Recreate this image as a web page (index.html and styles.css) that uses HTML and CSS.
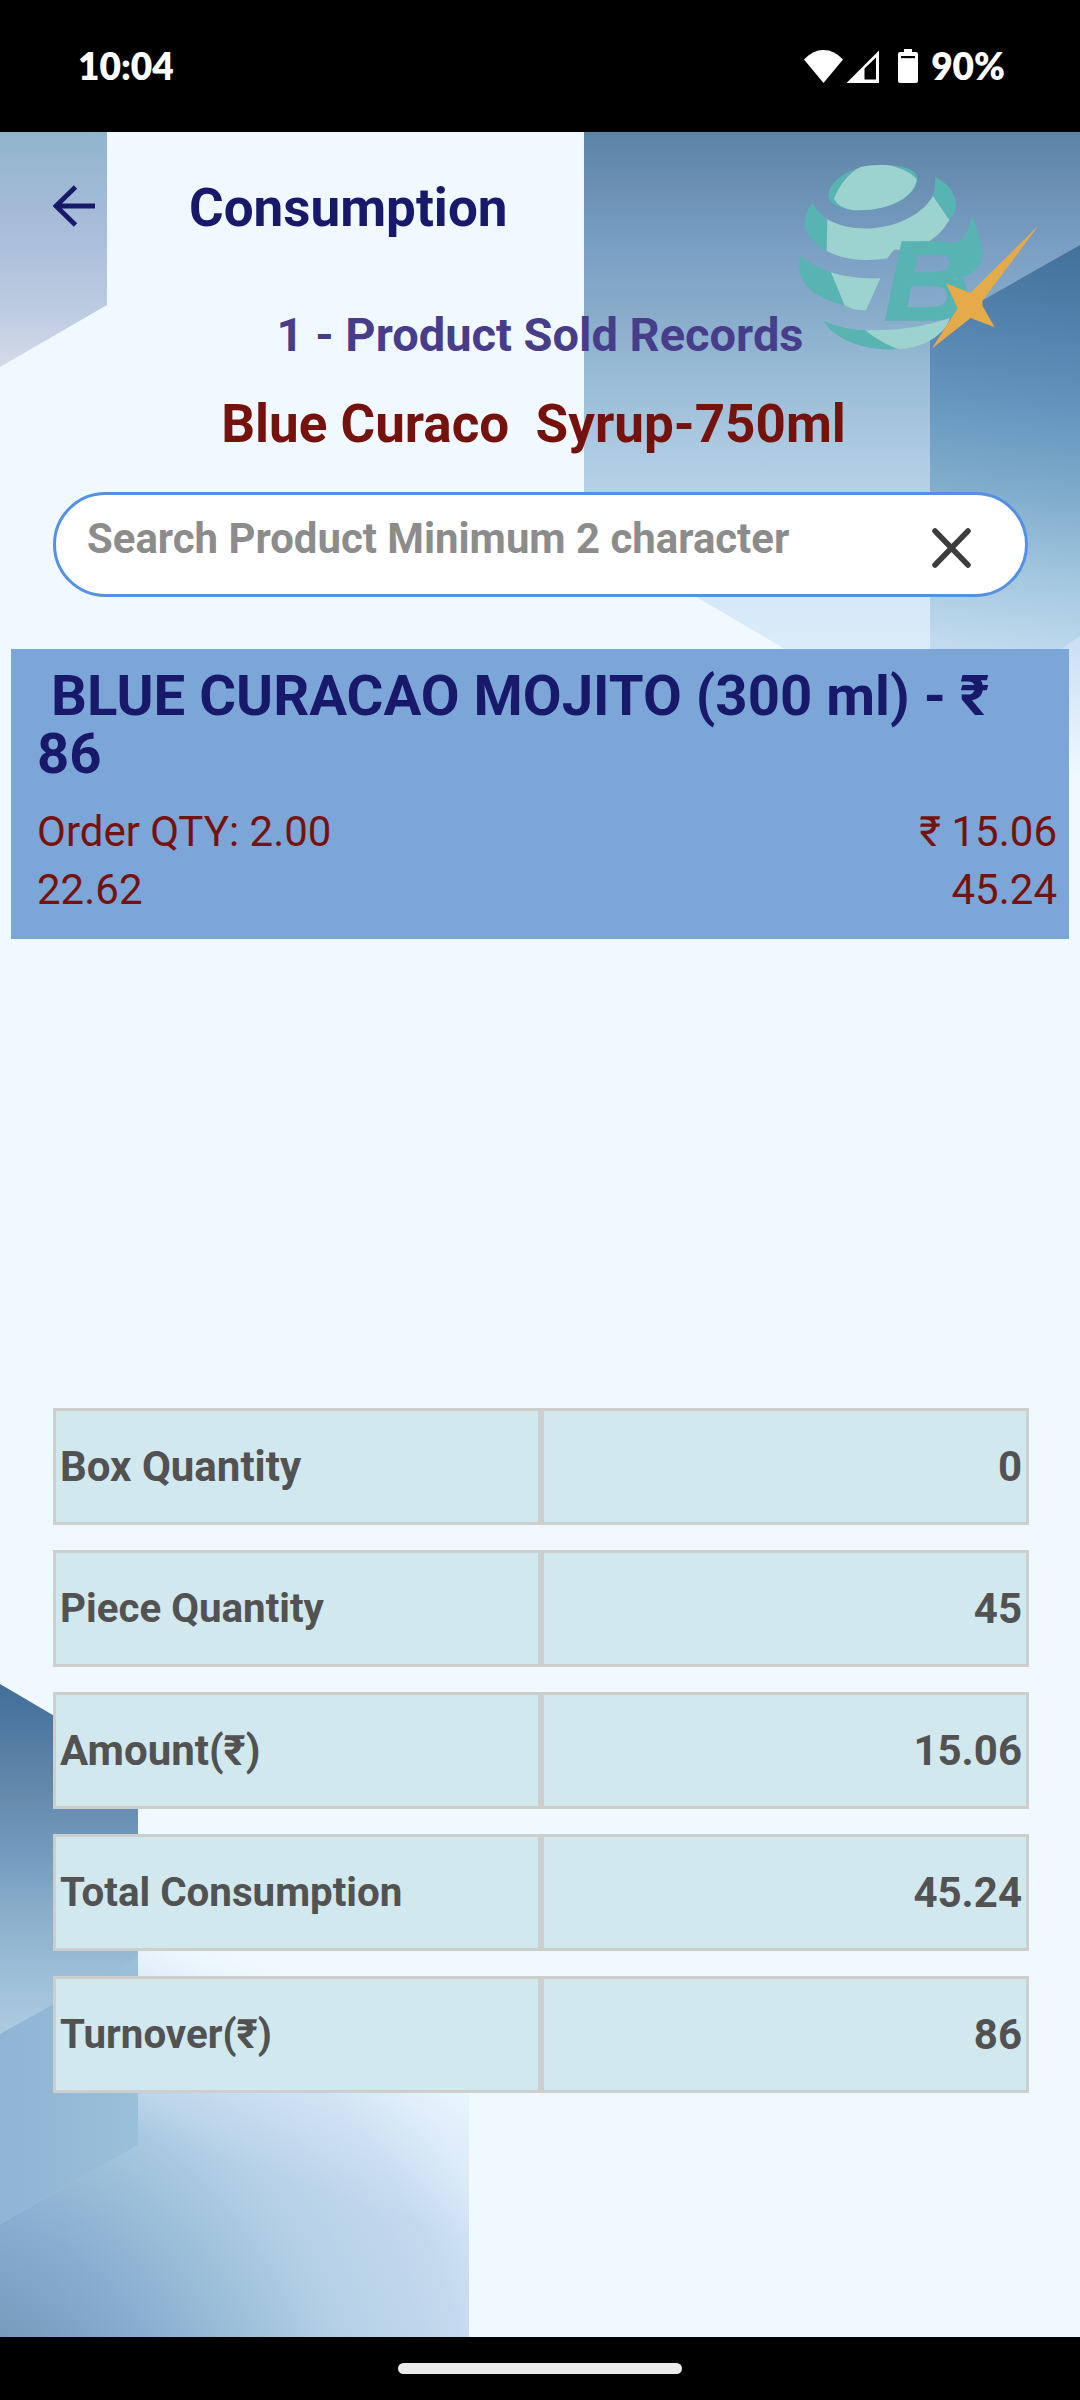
FILE: index.html
```html
<!DOCTYPE html>
<html lang="en">
<head>
<meta charset="utf-8">
<title>Consumption</title>
<link rel="stylesheet" href="styles.css">
</head>
<body>
<div class="phone">
  <header class="status">
    <span class="clock">10:04</span>
    <div class="indicators">
      <svg class="signals" viewBox="0 0 115 36" width="115" height="36">
        <path d="M0 11.500Q8.500 2 19.500 2Q30.500 2 39 11.500L19.500 35Z" fill="#fff"/>
        <path d="M42.500 35L75 2.500V35Z" fill="#fff"/>
        <path d="M60.500 20.500L72 9.500V31.500H60.500Z" fill="#000"/>
        <path d="M100 1h8v3h4q2 0 2 2v27q0 2-2 2h-16q-2 0-2-2v-27q0-2 2-2h4z" fill="#fff"/>
        <path d="M97 8h14v2.200h-14z" fill="#000"/>
      </svg>
      <span class="percent">90%</span>
    </div>
  </header>

  <main class="app">
    <svg class="backdrop" viewBox="0 132 1080 2205" width="1080" height="2205" aria-hidden="true">
      <defs>
        <linearGradient id="tl" x1="0" y1="0" x2="0" y2="1">
          <stop offset="0" stop-color="#91b4cd"/><stop offset=".42" stop-color="#a9bdda"/><stop offset=".75" stop-color="#bccbe0"/><stop offset="1" stop-color="#d5dbe9"/>
        </linearGradient>
        <linearGradient id="tr" gradientUnits="userSpaceOnUse" x1="0" y1="132" x2="0" y2="655">
          <stop offset="0" stop-color="#5c84a6"/><stop offset=".1" stop-color="#6a8fb3"/><stop offset=".22" stop-color="#7a9fc4"/><stop offset=".34" stop-color="#87abc9"/><stop offset=".48" stop-color="#9bbdd7"/><stop offset=".62" stop-color="#aecbe3"/><stop offset=".75" stop-color="#bdd6ea"/><stop offset=".89" stop-color="#d6e7f7"/><stop offset="1" stop-color="#dbecfb"/>
        </linearGradient>
        <linearGradient id="dark" gradientUnits="userSpaceOnUse" x1="1040" y1="245" x2="990" y2="650">
          <stop offset="0" stop-color="#42729a"/><stop offset=".2" stop-color="#5382ae"/><stop offset=".42" stop-color="#6798c0"/><stop offset=".62" stop-color="#82aecd"/><stop offset=".82" stop-color="#a5c9e1"/><stop offset="1" stop-color="#c1daee"/>
        </linearGradient>
        <linearGradient id="corner" gradientUnits="userSpaceOnUse" x1="0" y1="640" x2="0" y2="780">
          <stop offset="0" stop-color="#cbdff3"/><stop offset="1" stop-color="#f0f9ff"/>
        </linearGradient>
        <linearGradient id="left" gradientUnits="userSpaceOnUse" x1="0" y1="1684" x2="0" y2="2040">
          <stop offset="0" stop-color="#416e98"/><stop offset=".16" stop-color="#547da4"/><stop offset=".3" stop-color="#6489ab"/><stop offset=".48" stop-color="#749bbf"/><stop offset=".65" stop-color="#8bafcb"/><stop offset=".85" stop-color="#a0c1da"/><stop offset="1" stop-color="#b0cce1"/>
        </linearGradient>
        <linearGradient id="facet" x1="0" y1="0" x2="1" y2="0">
          <stop offset="0" stop-color="#8fb4d5"/><stop offset="1" stop-color="#9bc0da"/>
        </linearGradient>
        <radialGradient id="floor" gradientUnits="userSpaceOnUse" cx="-100" cy="2480" r="740">
          <stop offset=".22" stop-color="#7599bb"/><stop offset=".38" stop-color="#88add0"/><stop offset=".52" stop-color="#a0c2db"/><stop offset=".62" stop-color="#b4d0e7"/><stop offset=".78" stop-color="#c3d9ee"/><stop offset=".87" stop-color="#d6e7f8"/><stop offset="1" stop-color="#e6f3fe"/>
        </radialGradient>
        <linearGradient id="haze" gradientUnits="userSpaceOnUse" x1="260" y1="1962" x2="195" y2="2150">
          <stop offset="0" stop-color="#f0f9ff"/><stop offset=".5" stop-color="#f0f9ff" stop-opacity=".35"/><stop offset="1" stop-color="#f0f9ff" stop-opacity="0"/>
        </linearGradient>
      </defs>
      <path d="M0 132H107V305L0 367Z" fill="url(#tl)"/>
      <path d="M584 132H1080V655H795L584 531Z" fill="url(#tr)"/>
      <path d="M1080 245V655H930V330Z" fill="url(#dark)"/>
      <path d="M1080 636V780H1060V650Z" fill="url(#corner)"/>
      <path d="M0 1940H469V2337H0Z" fill="url(#floor)"/>
      <path d="M0 1940H469V2337H0Z" fill="url(#haze)"/>
      <path d="M0 1684L138 1765V2145L0 2224Z" fill="url(#left)"/>
      <path d="M0 2034L138 1957V2145L0 2224Z" fill="url(#facet)"/>
    </svg>

    <svg class="logo" viewBox="0 0 960 720" width="320" height="240" role="img" aria-label="BX">
      <g fill="#58b3b3">
        <path d="M205 192C210 145 285 104 360 104C430 104 472 120 472 145C472 200 390 241 300 241C240 241 202 222 205 192Z"/>
        <path d="M158 220C170 240 185 256 202 268L200 363C160 340 134 310 134 280C134 255 143 236 158 220Z"/>
        <path d="M526 140C570 165 590 195 588 230C584 248 577 260 568 270L519 198C524 180 526 160 526 140Z"/>
        <path d="M118 373C148 400 180 417 213 427L254 526C165 505 118 460 118 410Z"/>
        <path d="M190 572C230 590 275 600 316 600C345 625 380 645 416 657C320 665 225 630 190 572Z"/>
        <path d="M635 255C655 300 668 340 667 385C660 415 630 435 608 441L625 490L560 520L600 420L597 385L560 337H590C615 325 628 300 635 255Z"/>
      </g>
      <g fill="#9dd3cf">
        <path d="M222 206C240 160 270 128 300 112C330 104 380 103 400 109C430 118 455 130 470 148C465 200 390 241 300 241C260 241 232 228 222 206Z"/>
        <path d="M202 268C300 325 465 290 519 198L568 270C550 300 530 320 505 335H470L463 359H402L382 385C325 395 255 392 200 363Z"/>
        <path d="M213 427C255 441 310 447 361 445L318 541C292 542 270 536 254 526Z"/>
        <path d="M316 600C405 605 490 590 570 565C555 615 490 655 416 657C380 645 345 625 316 600Z"/>
      </g>
      <text class="logo-letter" x="371" y="571" textLength="266" lengthAdjust="spacingAndGlyphs">B</text>
      <path d="M836 286L667 513L668 528L704 592L632 564L515 656L593 535L558 460L631 489Z" fill="#e5ab49"/>
    </svg>

    <div class="toolbar">
      <svg class="back" viewBox="0 0 42 42" width="42" height="42">
        <path d="M22.500 2L3 21L22.500 40M3 21H42" fill="none" stroke="#19196b" stroke-width="4.800"/>
      </svg>
      <h1 class="title">Consumption</h1>
    </div>
    <p class="records">1 - Product Sold Records</p>
    <p class="product">Blue Curaco  Syrup-750ml</p>

    <div class="search">
      <span class="placeholder">Search Product Minimum 2 character</span>
      <svg class="clear" viewBox="0 0 39 40" width="39" height="40">
        <path d="M3 3L36 37M36 3L3 37" stroke="#3d3d3d" stroke-width="5.500" stroke-linecap="round"/>
      </svg>
    </div>

    <section class="card">
      <h2 class="item"> BLUE CURACAO MOJITO (300 ml) - ₹ 86</h2>
      <div class="line"><span>Order QTY: 2.00</span><span>₹ 15.06</span></div>
      <div class="line"><span>22.62</span><span>45.24</span></div>
    </section>

    <section class="summary">
      <div class="row"><div class="cell">Box Quantity</div><div class="cell value">0</div></div>
      <div class="row"><div class="cell compact">Piece Quantity</div><div class="cell value">45</div></div>
      <div class="row"><div class="cell">Amount(₹)</div><div class="cell value">15.06</div></div>
      <div class="row"><div class="cell compact">Total Consumption</div><div class="cell value">45.24</div></div>
      <div class="row"><div class="cell compact">Turnover(₹)</div><div class="cell value">86</div></div>
    </section>
  </main>

  <footer class="nav"><div class="handle"></div></footer>
</div>
</body>
</html>
```
FILE: styles.css
```css
* { box-sizing: border-box; margin: 0; padding: 0; }
body { background: #000; font-family: Roboto, "Noto Sans", sans-serif; }
.phone { width: 1080px; height: 2400px; display: flex; flex-direction: column; overflow: hidden; }

.status {
  height: 132px; flex: none; display: flex; justify-content: space-between; align-items: center;
  padding: 0 75px 1px 78px; background: #000; color: #fff;
  font: 800 37px/44px Lato, "Noto Sans", sans-serif;
}
.indicators { display: flex; align-items: center; gap: 12px; }
.signals { display: block; }

.app { position: relative; height: 2205px; flex: none; background: #f0f9ff; isolation: isolate; }
.backdrop { position: absolute; inset: 0; z-index: -2; }
.logo { position: absolute; left: 760px; top: -2px; z-index: -1; }
.logo-letter { font: italic 700 338px "Liberation Sans", sans-serif; fill: #58b3b3; stroke: #58b3b3; stroke-width: 5px; }

.toolbar { height: 152px; display: flex; align-items: center; gap: 94px; padding-left: 53px; }
.back { display: block; margin-top: -5px; }
.title { font-size: 53px; font-weight: 700; line-height: 60px; color: #19196b; }
.records { font-size: 47px; font-weight: 700; line-height: 102px; text-align: center; color: #483d8b; }
.product {
  font-size: 53px; font-weight: 700; line-height: 76px; text-align: center;
  padding-right: 13px; white-space: pre; color: #76120d;
}

.search {
  height: 105px; margin: 30px 52px 0 53px; padding: 0 54px 0 31px;
  display: flex; align-items: center; justify-content: space-between;
  background: #fff; border: 3px solid #5490e5; border-radius: 53px;
}
.placeholder { font-size: 41.900px; font-weight: 700; line-height: 50px; margin-bottom: 12px; color: #8c8c8c; }
.clear { display: block; margin-top: 7px; }

.card { height: 290px; margin: 52px 11px 0; padding: 18px 12px 0 26px; background: #7ca5d8; }
.item { font-size: 56.300px; font-weight: 700; line-height: 58px; white-space: pre-wrap; color: #19196b; margin-bottom: 20px; }
.line { display: flex; justify-content: space-between; font-size: 42px; line-height: 58px; color: #76120d; }

.summary { margin: 469px 51px 0 53px; display: grid; gap: 25px; }
.row { display: grid; grid-template-columns: 1fr 1fr; height: 117px; }
.cell {
  display: flex; align-items: center; padding: 0 4px; background: #d1e8ee; border: 3px solid #cdcfcf;
  font-size: 42px; font-weight: 700; color: #525252;
}
.compact { font-size: 40.300px; }
.value { justify-content: flex-end; }

.nav { height: 63px; flex: none; display: flex; justify-content: center; align-items: center; background: #000; }
.handle { width: 284px; height: 11px; border-radius: 6px; background: #ebebeb; }
```
